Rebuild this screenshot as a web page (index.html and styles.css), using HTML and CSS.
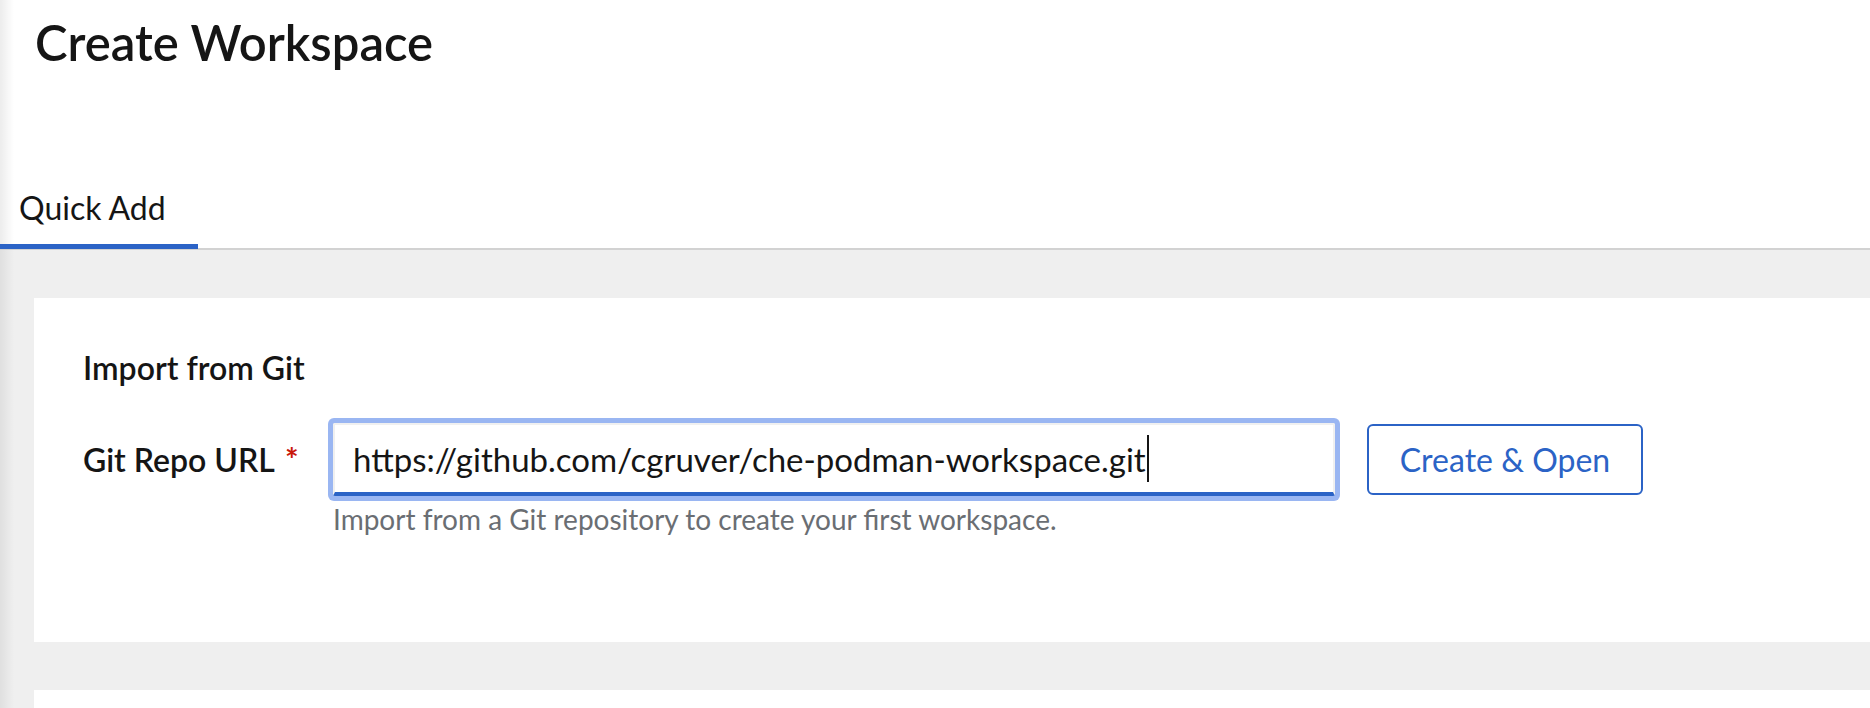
FILE: index.html
```html
<!DOCTYPE html>
<html lang="en">
<head>
<meta charset="utf-8">
<title>Create Workspace</title>
<link rel="stylesheet" href="styles.css">
</head>
<body>
<div class="page">
  <header class="page-header">
    <h1 class="page-title">Create Workspace</h1>
    <nav class="tabs">
      <div class="tab tab-active">Quick Add</div>
    </nav>
  </header>
  <main class="content">
    <section class="card">
      <h2 class="card-title">Import from Git</h2>
      <div class="form-grid">
        <label class="form-label">Git Repo URL <span class="required">*</span></label>
        <div class="text-input"><span class="input-value">https://github.com/cgruver/che-podman-workspace.git</span><span class="caret"></span></div>
        <button class="btn-secondary" type="button">Create &amp; Open</button>
        <div class="helper-text">Import from a Git repository to create your first workspace.</div>
      </div>
    </section>
    <section class="card card-next"></section>
  </main>
</div>
</body>
</html>
```

FILE: styles.css
```css
html, body {
  margin: 0;
  padding: 0;
  background: #ffffff;
}

body {
  font-family: "Lato", "Liberation Sans", sans-serif;
  color: #151515;
  overflow: hidden;
}

.page {
  width: 1870px;
  min-height: 708px;
  display: flex;
  flex-direction: column;
}

.page-header {
  background: linear-gradient(to right, rgba(0, 0, 0, 0.075), rgba(0, 0, 0, 0) 14px), #ffffff;
  padding-top: 12px;
}

.page-title {
  margin: 0 0 0 35px;
  font-size: 49px;
  line-height: 61px;
  font-weight: 600;
  letter-spacing: 0;
}

.tabs {
  margin-top: 99px;
  display: flex;
  border-bottom: 2px solid #d2d2d2;
}

.tab {
  width: 198px;
  box-sizing: border-box;
  padding: 16px 0 16px 19px;
  font-size: 32px;
  line-height: 40px;
  color: #151515;
  border-bottom: 5px solid transparent;
  margin-bottom: -1px;
}

.tab-active {
  border-bottom-color: #2b63c6;
}

.content {
  flex: 1;
  background: linear-gradient(to right, rgba(0, 0, 0, 0.065), rgba(0, 0, 0, 0) 14px), #efefef;
  padding: 48px 0 0 34px;
  display: flex;
  flex-direction: column;
  gap: 48px;
}

.card {
  background: #ffffff;
  padding: 51px 0 106px 49px;
}

.card-next {
  min-height: 120px;
  padding: 0;
}

.card-title {
  margin: 0 0 36px 0;
  font-size: 32px;
  line-height: 38px;
  font-weight: 600;
}

.form-grid {
  display: grid;
  grid-template-columns: 218px 1002px 276px;
  column-gap: 32px;
  align-items: center;
}

.form-label {
  font-size: 32px;
  line-height: 38px;
  font-weight: 600;
  grid-column: 1;
  grid-row: 1;
  white-space: nowrap;
  margin-right: -32px;
}

.required {
  color: #c9190b;
  font-weight: 700;
  margin-left: 3px;
}

.text-input {
  grid-column: 2;
  grid-row: 1;
  height: 73px;
  box-sizing: border-box;
  border: 2px solid #f0f0f0;
  border-bottom: 4px solid #2b63c6;
  border-radius: 2px;
  box-shadow: 0 0 0 5px #9ab6f2;
  padding: 0 18px;
  display: flex;
  align-items: center;
  font-size: 33px;
  line-height: 40px;
  color: #151515;
  background: #ffffff;
  white-space: nowrap;
}

.caret {
  display: inline-block;
  width: 2px;
  height: 47px;
  background: #151515;
  margin-left: 1px;
}

.btn-secondary {
  grid-column: 3;
  grid-row: 1;
  height: 71px;
  box-sizing: border-box;
  border: 2px solid #2b63c6;
  border-radius: 6px;
  background: #ffffff;
  color: #2b63c6;
  font-family: "Lato", "Liberation Sans", sans-serif;
  font-size: 32px;
  line-height: 40px;
  padding: 0;
  text-align: center;
  cursor: pointer;
}

.helper-text {
  grid-column: 2 / 4;
  grid-row: 2;
  margin-top: 6px;
  font-size: 28px;
  line-height: 34px;
  color: #6a6e73;
}
```
